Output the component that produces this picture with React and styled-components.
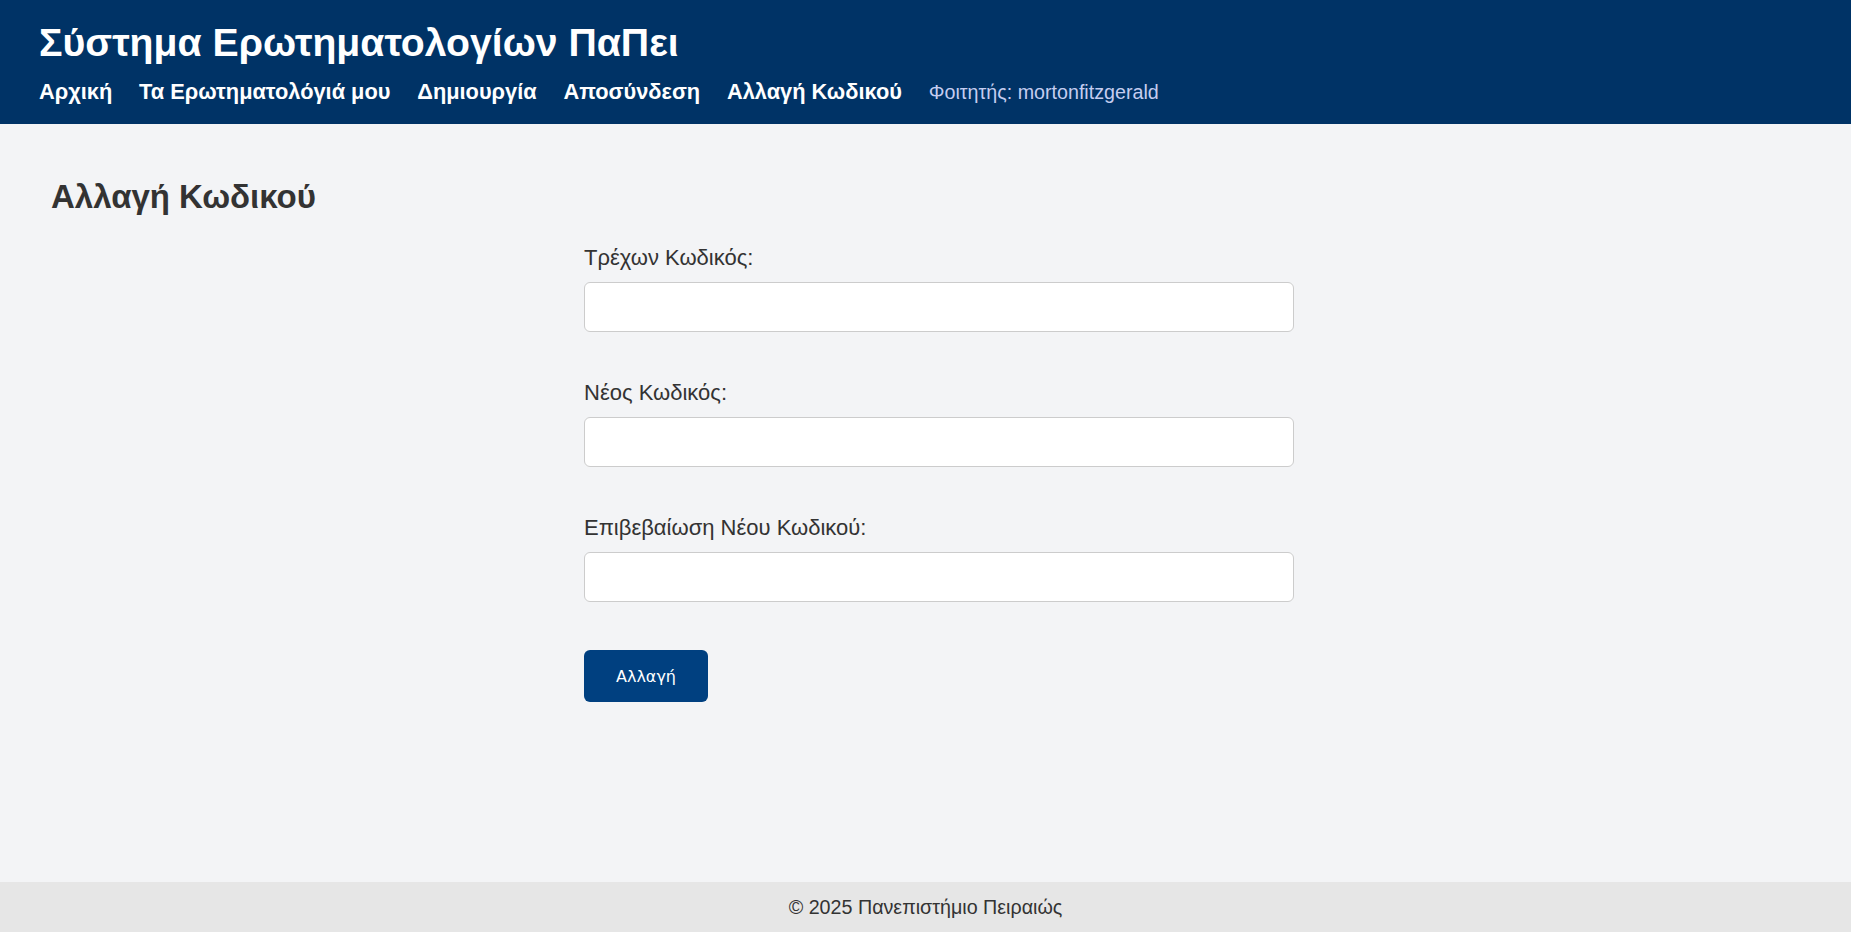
import React from "react";
import styled, { createGlobalStyle } from "styled-components";

const GlobalStyle = createGlobalStyle`
  html, body {
    margin: 0;
    padding: 0;
    height: 100%;
  }
  body {
    font-family: "Liberation Sans", Arial, sans-serif;
    background: #f3f4f6;
    color: #333;
  }
  #root {
    min-height: 100vh;
    display: flex;
    flex-direction: column;
  }
`;

const Header = styled.header`
  background: #003366;
  color: #fff;
  padding: 21px 39px 0;
  height: 124px;
  box-sizing: border-box;
  h1 {
    margin: 0 0 15px;
    font-size: 39.2px;
    font-weight: 700;
    line-height: 1.1;
  }
`;

const Nav = styled.nav`
  display: flex;
  align-items: baseline;
  gap: 26.8px;
  a {
    color: #fff;
    font-weight: 700;
    font-size: 21.8px;
    text-decoration: none;
  }
  .user {
    color: #c5cdf0;
    font-size: 19.7px;
  }
`;

const Main = styled.main`
  flex: 1;
  padding: 54px 24px 40px 51px;
  h2 {
    margin: 0 0 29px;
    font-size: 33px;
    font-weight: 700;
    color: #333;
  }
`;

const Form = styled.form`
  max-width: 710px;
  margin: 0 auto;
`;

const Field = styled.div`
  margin-bottom: 48px;
  label {
    display: block;
    font-size: 22px;
    color: #333;
    margin-bottom: 11px;
  }
`;

const Input = styled.input`
  display: block;
  width: 100%;
  box-sizing: border-box;
  height: 50px;
  border: 1px solid #ccc;
  border-radius: 6px;
  background: #fff;
  font-size: 18px;
  padding: 0 12px;
`;

const Button = styled.button`
  display: block;
  width: 124px;
  height: 52px;
  background: #004080;
  color: #fff;
  border: none;
  border-radius: 6px;
  font-family: "DejaVu Sans", sans-serif;
  font-size: 16px;
  cursor: pointer;
`;

const Footer = styled.footer`
  background: #e6e6e6;
  height: 50px;
  display: flex;
  align-items: center;
  justify-content: center;
  font-size: 19.7px;
  color: #333;
`;

export default function App() {
  return (
    <>
      <GlobalStyle />
      <Header>
        <h1>Σύστημα Ερωτηματολογίων ΠαΠει</h1>
        <Nav>
          <a href="#">Αρχική</a>
          <a href="#">Τα Ερωτηματολόγιά μου</a>
          <a href="#">Δημιουργία</a>
          <a href="#">Αποσύνδεση</a>
          <a href="#">Αλλαγή Κωδικού</a>
          <span className="user">Φοιτητής: mortonfitzgerald</span>
        </Nav>
      </Header>
      <Main>
        <h2>Αλλαγή Κωδικού</h2>
        <Form onSubmit={(e) => e.preventDefault()}>
          <Field>
            <label>Τρέχων Κωδικός:</label>
            <Input type="password" />
          </Field>
          <Field>
            <label>Νέος Κωδικός:</label>
            <Input type="password" />
          </Field>
          <Field>
            <label>Επιβεβαίωση Νέου Κωδικού:</label>
            <Input type="password" />
          </Field>
          <Button type="submit">Αλλαγή</Button>
        </Form>
      </Main>
      <Footer>© 2025 Πανεπιστήμιο Πειραιώς</Footer>
    </>
  );
}
